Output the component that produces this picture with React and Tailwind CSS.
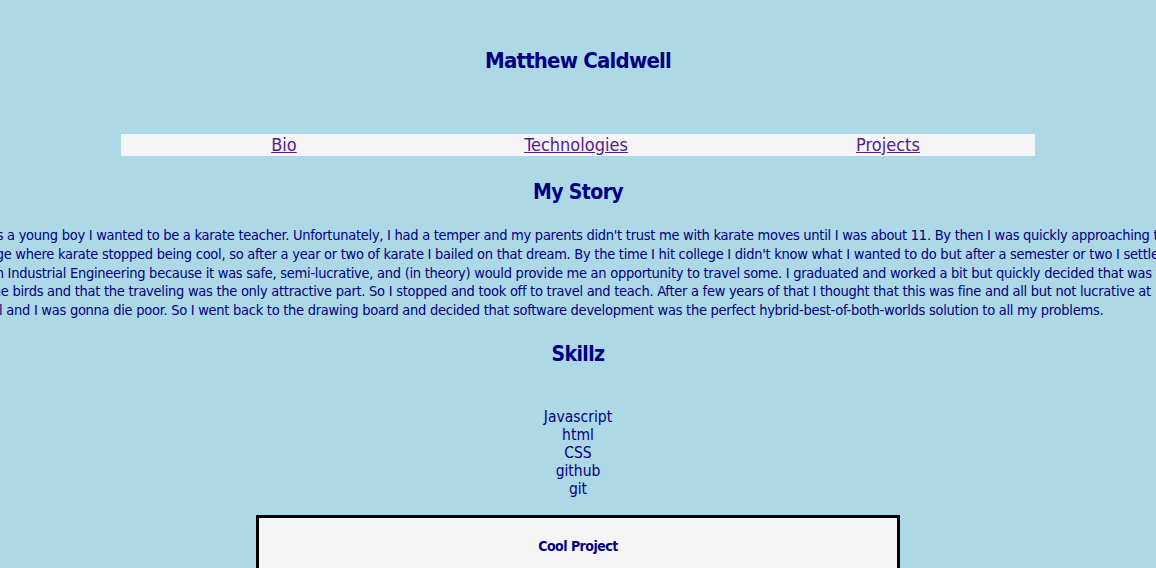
const story = [
  "As a young boy I wanted to be a karate teacher. Unfortunately, I had a temper and my parents didn't trust me with karate moves until I was about 11. By then I was quickly approaching the",
  "age where karate stopped being cool, so after a year or two of karate I bailed on that dream. By the time I hit college I didn't know what I wanted to do but after a semester or two I settled",
  "on Industrial Engineering because it was safe, semi-lucrative, and (in theory) would provide me an opportunity to travel some. I graduated and worked a bit but quickly decided that was for",
  "the birds and that the traveling was the only attractive part. So I stopped and took off to travel and teach. After a few years of that I thought that this was fine and all but not lucrative at",
  "all and I was gonna die poor. So I went back to the drawing board and decided that software development was the perfect hybrid-best-of-both-worlds solution to all my problems.",
]

const skills = ['Javascript', 'html', 'CSS', 'github', 'git']

export default function App() {
  return (
    <div className="h-screen w-full overflow-hidden bg-[#add8e6] text-[#000080] font-['DejaVu_Sans_Condensed','Liberation_Sans',sans-serif]">
      <header className="h-[120px] flex items-center justify-center">
        <h1 className="text-[22px] font-bold tracking-[-0.8px]">Matthew Caldwell</h1>
      </header>

      <nav className="mt-[14px] mx-auto w-[914px] h-[22px] bg-[#f5f5f5] flex items-center text-[18px] leading-[22px]">
        <div className="w-[326px] text-center">
          <a href="#bio" className="underline text-[#551a8b]">Bio</a>
        </div>
        <div className="w-[258px] text-center">
          <a href="#tech" className="underline text-[#551a8b]">Technologies</a>
        </div>
        <div className="ml-[36px] w-[294px] text-center">
          <a href="#projects" className="underline text-[#551a8b]">Projects</a>
        </div>
      </nav>

      <section id="bio">
        <h2 className="mt-[14px] h-[46px] flex items-center justify-center text-[21px] font-bold tracking-[-0.6px]">My Story</h2>
        <p className="mt-[10px] ml-[-12px] w-[1400px] text-left whitespace-nowrap text-[14.5px] tracking-[-0.27px] leading-[18.75px]">
          {story.map((line, i) => (
            <span key={i} className="block">{line}</span>
          ))}
        </p>
      </section>

      <section id="tech">
        <h2 className="mt-[13px] h-[44px] flex items-center justify-center text-[21px] font-bold tracking-[-0.6px]">Skillz</h2>
        <ul className="mt-[31px] text-center text-[15.5px] leading-[18px]">
          {skills.map(s => (
            <li key={s}>{s}</li>
          ))}
        </ul>
      </section>

      <section id="projects" className="mt-[17px] mx-auto w-[644px] border-[3px] border-black bg-[#f5f5f5] pt-[18px] pb-[40px]">
        <h3 className="text-center text-[14px] font-bold tracking-[-0.5px] leading-[20px]">Cool Project</h3>
      </section>
    </div>
  )
}
